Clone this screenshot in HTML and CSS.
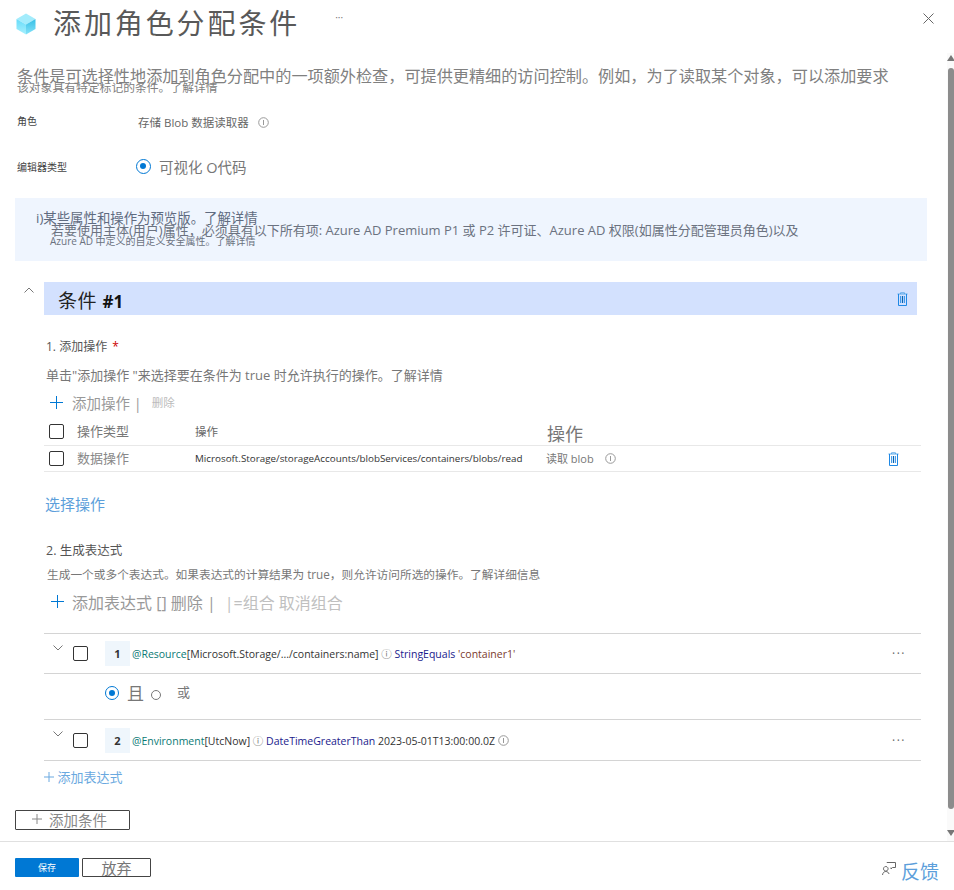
FILE: index.html
```html
<!DOCTYPE html>
<html lang="zh-CN">
<head>
<meta charset="utf-8">
<title>添加角色分配条件</title>
<link rel="stylesheet" href="styles.css">
</head>
<body>
<div class="page">
  <header class="blade-head">
    <svg class="cube" width="20" height="22" viewBox="0 0 20 22"><defs><linearGradient id="cubeL" x1="0" y1="0" x2="0" y2="1"><stop offset="0" stop-color="#66dcfa"/><stop offset="1" stop-color="#a8f0fd"/></linearGradient><linearGradient id="cubeR" x1="0" y1="0" x2="0" y2="1"><stop offset="0" stop-color="#35bfe6"/><stop offset="1" stop-color="#86e3f9"/></linearGradient></defs><path d="M10 .5l9.500 5.500-9.500 5.500L.5 6z" fill="#a3ecfc"/><path d="M.5 6l9.500 5.500v10l-9.500-5.500z" fill="url(#cubeL)"/><path d="M19.500 6L10 11.500v10l9.500-5.500z" fill="url(#cubeR)"/></svg>
    <h1 class="title">添加角色分配条件</h1>
    <span class="head-more">···</span>
    <svg class="close" width="11" height="11" viewBox="0 0 11 11"><path d="M.5.5l10 10M10.500.5l-10 10" stroke="#666" fill="none"/></svg>
  </header>
  <div class="body-wrap">
    <main class="content">
      <p class="lead">条件是可选择性地添加到角色分配中的一项额外检查，可提供更精细的访问控制。例如，为了读取某个对象，可以添加要求</p>
      <p class="lead-2">该对象具有特定标记的条件。了解详情</p>
      <div class="field role-field">
        <span class="field-label">角色</span>
        <span class="role-value">存储 Blob 数据读取器</span>
        <svg class="info role-info" width="11" height="11" viewBox="0 0 11 11"><circle cx="5.500" cy="5.500" r="4.800" fill="none" stroke="#999"/><path d="M5.500 3v5" stroke="#999"/></svg>
      </div>
      <div class="field editor-field">
        <span class="field-label">编辑器类型</span>
        <span class="radio on"></span>
        <span class="editor-value">可视化 O代码</span>
      </div>
      <section class="banner">
        <p class="banner-1">i)某些属性和操作为预览版。了解详情</p>
        <p class="banner-2">若要使用主体(用户)属性，必须具有以下所有项: Azure AD Premium P1 或 P2 许可证、Azure AD 权限(如属性分配管理员角色)以及</p>
        <p class="banner-3">Azure AD 中定义的自定义安全属性。了解详情</p>
      </section>
      <section class="condition">
        <div class="cond-head-row">
          <svg class="cond-chevron" width="10" height="6" viewBox="0 0 10 6"><path d="M.5 5.500l4.500-4.500 4.500 4.500" fill="none" stroke="#777"/></svg>
          <div class="cond-head">
            <span class="cond-title">条件 <b>#1</b></span>
            <svg class="trash" width="11" height="14" viewBox="0 0 11 14"><path d="M.5 2h10M3.500 2V.8h4V2" fill="none" stroke="#5aa9ea"/><path d="M1.500 2v11.500h8V2M3.700 4v7M7.300 4v7" fill="none" stroke="#1e88e5"/><path d="M5.500 4v7" fill="none" stroke="#0b62ad"/></svg>
          </div>
        </div>
        <div class="cond-body">
          <h2 class="step">1. 添加操作 <span class="req">*</span></h2>
          <p class="step-desc">单击"添加操作 "来选择要在条件为 true 时允许执行的操作。了解详情</p>
          <div class="toolbar tb-actions">
            <svg class="plus" width="13" height="13" viewBox="0 0 13 13"><path d="M6.500 0v13M0 6.500h13" stroke="#0078d4"/></svg>
            <span class="tb-main">添加操作 |</span>
            <span class="tb-small">删除</span>
          </div>
          <div class="table">
            <div class="tr th">
              <span class="check"></span>
              <span class="c-type">操作类型</span>
              <span class="c-op">操作</span>
              <span class="c-act">操作</span>
            </div>
            <div class="tr td">
              <span class="check"></span>
              <span class="c-type">数据操作</span>
              <span class="c-op path">Microsoft.Storage/storageAccounts/blobServices/containers/blobs/read</span>
              <span class="c-act">读取 blob <svg class="info" width="11" height="11" viewBox="0 0 11 11"><circle cx="5.500" cy="5.500" r="4.800" fill="none" stroke="#999"/><path d="M5.500 3v5" stroke="#999"/></svg></span>
              <svg class="trash row-trash" width="11" height="14" viewBox="0 0 11 14"><path d="M.5 2h10M3.500 2V.8h4V2" fill="none" stroke="#5aa9ea"/><path d="M1.500 2v11.500h8V2M3.700 4v7M7.300 4v7" fill="none" stroke="#1e88e5"/><path d="M5.500 4v7" fill="none" stroke="#0b62ad"/></svg>
            </div>
          </div>
          <a class="select-op">选择操作</a>
          <h2 class="step step-2">2. 生成表达式</h2>
          <p class="step-desc-2">生成一个或多个表达式。如果表达式的计算结果为 true，则允许访问所选的操作。了解详细信息</p>
          <div class="toolbar tb-expr">
            <svg class="plus" width="13" height="13" viewBox="0 0 13 13"><path d="M6.500 0v13M0 6.500h13" stroke="#0078d4"/></svg>
            <span class="tb-expr-main">添加表达式 [] 删除 |</span>
            <span class="tb-expr-off">|=组合 取消组合</span>
          </div>
          <div class="expr">
            <svg class="chev" width="10" height="6" viewBox="0 0 10 6"><path d="M.5.5l4.500 4.500 4.500-4.500" fill="none" stroke="#777"/></svg>
            <span class="check"></span>
            <span class="num">1</span>
            <span class="code"><i class="c-attr">@Resource</i>[Microsoft.Storage/.../containers:name] <i class="c-ic">ⓘ</i> <i class="c-fn">StringEquals</i> <i class="c-str">'container1'</i></span>
            <span class="more">···</span>
          </div>
          <div class="logic">
            <span class="radio on small"></span>
            <span class="logic-and">且</span>
            <span class="radio-o"></span>
            <span class="logic-or">或</span>
          </div>
          <div class="expr">
            <svg class="chev" width="10" height="6" viewBox="0 0 10 6"><path d="M.5.5l4.500 4.500 4.500-4.500" fill="none" stroke="#777"/></svg>
            <span class="check"></span>
            <span class="num">2</span>
            <span class="code"><i class="c-attr">@Environment</i>[UtcNow] <i class="c-ic">ⓘ</i> <i class="c-fn">DateTimeGreaterThan</i> 2023-05-01T13:00:00.0Z <svg class="info" width="11" height="11" viewBox="0 0 11 11"><circle cx="5.500" cy="5.500" r="4.800" fill="none" stroke="#999"/><path d="M5.500 3v5" stroke="#999"/></svg></span>
            <span class="more">···</span>
          </div>
          <a class="add-expr"><svg width="10" height="10" viewBox="0 0 10 10"><path d="M5 0v10M0 5h10" stroke="#6aa9e0"/></svg> 添加表达式</a>
        </div>
      </section>
      <button class="add-cond"><svg class="add-cond-plus" width="10" height="10" viewBox="0 0 10 10"><path d="M5 0v10M0 5h10" stroke="#888"/></svg><span class="add-cond-text">添加条件</span></button>
    </main>
    <aside class="scrollbar">
      <span class="arrow up"></span>
      <span class="thumb"></span>
      <span class="arrow down"></span>
    </aside>
  </div>
  <footer class="foot">
    <button class="btn-save">保存</button>
    <button class="btn-discard">放弃</button>
    <span class="feedback">
      <svg class="fb-icon" width="14" height="14" viewBox="0 0 14 14"><path d="M5 1v-.5h8.500v5H10.500L9 7V5.500M3.800 4.500a2.300 2.300 0 1 0 .01 0M.5 13c.3-2.500 1.800-3.500 3.300-3.500S6.800 10.500 7 12" fill="none" stroke="#666"/></svg>
      <a>反馈</a>
    </span>
  </footer>
</div>
</body>
</html>
```
FILE: styles.css
```css
* { box-sizing: border-box; }
html, body { margin: 0; padding: 0; background: #fff; }
body { font-family: "Open Sans", "Noto Sans CJK SC", sans-serif; color: #666; }
p, h1, h2 { margin: 0; font-weight: 400; }
i { font-style: normal; }
.page { width: 954px; height: 890px; overflow: hidden; display: flex; flex-direction: column; }

.blade-head { height: 53px; display: flex; align-items: flex-start; padding: 13px 0 0 16px; flex: none; }
.cube { flex: none; }
.title { margin: -9px 0 0 17px; font-size: 28px; line-height: 38px; letter-spacing: 2.900px; color: #595959; white-space: nowrap; }
.head-more { margin: -3px 0 0 35px; font-size: 10px; line-height: 14px; color: #777; letter-spacing: 0; }
.close { margin: 0 0 0 580px; flex: none; }

.body-wrap { height: 788px; display: flex; flex: none; }
.content { width: 947px; flex: none; padding-left: 15px; }

.lead { margin: 11px 0 0 2px; font-size: 16.150px; line-height: 24px; color: #808080; white-space: nowrap; }
.lead-2 { margin: -7px 0 0 2px; font-size: 11.800px; line-height: 12px; color: #808080; white-space: nowrap; }

.field { display: flex; align-items: center; position: relative; }
.field-label { width: 123px; padding-left: 2px; font-size: 10px; color: #444; flex: none; }
.role-field { height: 20px; margin-top: 19px; }
.role-field .field-label { margin-top: -4px; }
.role-value { font-size: 11.500px; color: #666; }
.info { display: inline-block; vertical-align: -1px; flex: none; }
.role-info { margin-left: 9px; }
.editor-field { height: 24px; margin-top: 22px; }
.radio { width: 15px; height: 15px; border: 1.500px solid #0078d4; border-radius: 50%; background: #fff; position: relative; flex: none; }
.radio.on::after { content: ""; position: absolute; left: 3px; top: 3px; width: 6px; height: 6px; border-radius: 50%; background: #0078d4; }
.editor-field .radio { margin-left: -2px; }
.editor-value { margin-left: 8px; font-size: 14.500px; color: #777; }

.banner { width: 912px; height: 63px; margin-top: 20px; background: #eff5fe; padding: 12px 0 0 21px; color: #6b7280; white-space: nowrap; }
.banner-1 { font-size: 13.400px; line-height: 16px; color: #5f6b80; }
.banner-2 { margin: -3px 0 0 15px; font-size: 13px; line-height: 15px; }
.banner-3 { margin: -2px 0 0 14px; font-size: 10px; line-height: 11px; }

.condition { margin-top: 21px; width: 906px; }
.cond-head-row { display: flex; position: relative; padding-left: 29px; }
.cond-chevron { position: absolute; left: 9px; top: 5px; }
.cond-head { width: 873px; height: 33px; background: #d3e1fe; display: flex; align-items: center; justify-content: space-between; padding: 0 9px 0 14px; }
.cond-title { margin-top: 2px; font-size: 19px; color: #222; letter-spacing: .5px; }
.cond-title b { font-size: 17px; color: #111; letter-spacing: 0; }
.trash { flex: none; }

.cond-body { padding-left: 29px; }
.step { margin: 24px 0 0 2px; font-size: 12px; line-height: 16px; color: #555; }
.req { color: #c00; margin-left: 2px; }
.step-desc { margin: 12px 0 0 2px; font-size: 13px; line-height: 17px; color: #777; white-space: nowrap; }
.toolbar { display: flex; align-items: center; white-space: nowrap; }
.tb-actions { height: 20px; margin-top: 8px; padding-left: 6px; }
.tb-main { margin-left: 9px; font-size: 14.500px; color: #999; }
.tb-small { margin-left: 10px; font-size: 11.500px; color: #bbb; }

.table { width: 877px; margin-top: 5px; }
.tr { display: flex; align-items: center; position: relative; border-bottom: 1px solid #e8e8e8; }
.th { height: 29px; }
.td { height: 26px; }
.check { width: 15px; height: 15px; border: 1.500px solid #333; border-radius: 2px; background: #fff; flex: none; }
.tr .check { margin-left: 5px; }
.c-type { width: 118px; margin: -2px 0 0 13px; flex: none; font-size: 13px; color: #777; }
.c-op { width: 352px; flex: none; font-size: 11.500px; color: #666; white-space: nowrap; }
.c-act { color: #777; white-space: nowrap; }
.th .c-act { font-size: 18px; margin-top: 4px; }
.td .c-act { font-size: 11px; margin: -2px 0 0 -1px; }
.td .c-act .info { margin-left: 8px; }
.td .c-type { color: #888; }
.path { font-size: 9.830px; color: #333; margin-top: -2px; }
.row-trash { margin-left: auto; margin-right: 22px; }

.select-op { display: block; margin: 22px 0 0 1px; font-size: 15px; line-height: 20px; color: #5d9fdb; }
.step-2 { margin: 29px 0 0 2px; font-size: 12.500px; line-height: 16px; color: #555; }
.step-desc-2 { margin: 8px 0 0 3px; font-size: 11.700px; line-height: 15px; color: #777; white-space: nowrap; }
.tb-expr { height: 23px; margin-top: 8px; padding-left: 7px; }
.tb-expr-main { margin-left: 8px; font-size: 16px; color: #999; }
.tb-expr-off { margin-left: 9px; font-size: 16px; color: #c0c0c0; }

.expr { width: 877px; display: flex; align-items: center; position: relative; border-top: 1px solid #d4d4d4; border-bottom: 1px solid #d4d4d4; padding-left: 29px; }
.tb-expr + .expr { margin-top: 20px; height: 41px; }
.logic + .expr { height: 42px; }
.chev { position: absolute; left: 9px; top: 11px; }
.num { width: 25px; height: 25px; margin-left: 17px; background: #eff6fc; display: flex; align-items: center; justify-content: center; font-size: 11px; font-weight: 700; color: #333; flex: none; }
.code { margin-left: 2px; font-size: 10.500px; color: #333; white-space: nowrap; }
.c-attr { color: #0b7a75; }
.c-ic { color: #777; }
.c-fn { color: #1a1a8c; }
.c-str { color: #7a3b2e; }
.more { margin-left: auto; margin-right: 15px; font-size: 12px; color: #666; letter-spacing: 1.500px; }

.logic { height: 45px; display: flex; align-items: center; padding-left: 61px; }
.logic .radio { width: 14px; height: 14px; margin-top: -7px; }
.logic .radio.on::after { left: 2.500px; top: 2.500px; }
.logic-and { margin: -8px 0 0 8px; font-size: 17px; color: #777; }
.radio-o { width: 10px; height: 10px; margin: -3px 0 0 7px; border: 1px solid #777; border-radius: 50%; }
.logic-or { margin: -10px 0 0 16px; font-size: 13px; color: #777; }

.add-expr { display: block; margin-top: 7px; font-size: 13px; line-height: 18px; color: #6aa9e0; }

.add-cond { display: flex; align-items: center; width: 115px; height: 20px; margin-top: 24px; padding: 0 0 0 16px; text-align: left; background: #fff; border: 1.500px solid #444; border-radius: 1px; font: inherit; font-size: 14.500px; line-height: 16px; color: #888; }
.add-cond-plus { margin-top: -3px; }
.add-cond-text { margin: 2px 0 0 7px; }

.scrollbar { width: 7px; flex: none; background: #fafafa; display: flex; flex-direction: column; align-items: center; position: relative; }
.arrow { width: 0; height: 0; border-left: 4px solid transparent; border-right: 4px solid transparent; flex: none; }
.arrow.up { border-bottom: 6px solid #777; margin-top: 2px; }
.arrow.down { border-top: 6px solid #777; margin-top: 21px; }
.thumb { width: 6px; height: 741px; margin-top: 7px; background: #8c8c8c; border-radius: 3px; flex: none; }

.foot { height: 49px; flex: none; border-top: 1px solid #e0e0e0; display: flex; align-items: flex-start; padding: 16px 15px 0; }
.btn-save { width: 64px; height: 19px; margin: 0; padding: 0; border: 0; border-radius: 1px; background: #0078d4; color: #fff; font: inherit; font-size: 9px; line-height: 19px; }
.btn-discard { width: 69px; height: 19px; margin: 0 0 0 3px; padding: 0; background: #fff; border: 1.500px solid #444; border-radius: 1px; font: inherit; font-size: 15px; line-height: 16px; color: #777; }
.feedback { margin-left: auto; margin-top: 3px; display: flex; align-items: center; gap: 5px; }
.fb-icon { margin-top: -6px; }
.feedback a { font-size: 19px; line-height: 22px; color: #5d9fdb; }
```
